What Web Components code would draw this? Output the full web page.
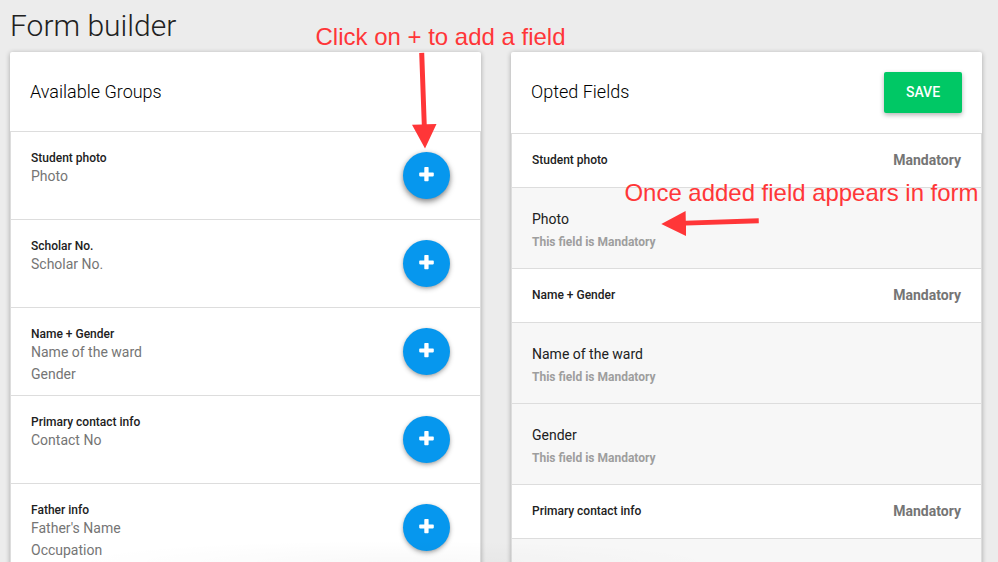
<!DOCTYPE html>
<html lang="en">
<head>
<meta charset="utf-8">
<title>Form builder</title>
<style>
html, body { margin: 0; height: 562px; overflow: hidden; background: #ececec; font-family: Roboto, "Liberation Sans", sans-serif; }
</style>
</head>
<body>
<form-builder></form-builder>
<script>
function define(name, html, setup) {
  const template = document.createElement('template');
  template.innerHTML = html;
  customElements.define(name, class extends HTMLElement {
    constructor() {
      super();
      this.attachShadow({ mode: 'open' }).append(template.content.cloneNode(true));
    }
    connectedCallback() { if (setup) setup(this, this.shadowRoot); }
  });
}

define('add-button', `
<style>
:host { display: block; width: 47px; height: 47px; flex: none; }
button { display: flex; justify-content: center; width: 47px; height: 47px; padding: 15px 0 0; box-sizing: border-box; border: 0; border-radius: 50%; background: #0697ee; box-shadow: 0 2px 5px rgba(0,0,0,.28), 0 1px 3px rgba(0,0,0,.12); }
svg { display: block; }
:host([raised]) button { box-shadow: 0 3px 6px rgba(0,0,0,.4), 0 1px 4px rgba(0,0,0,.16); }
</style>
<button aria-label="Add"><svg width="15" height="15" viewBox="0 0 15 15"><path fill="#fff" d="M6 0h3q.6 0 .6.6V5.4h4.4q.8 0 .8.8v2.4q0 .8-.8.8H9.6V13.5q0 .7-.7.7H6q-.7 0-.7-.7V9.4H1q-.8 0-.8-.8V6.2q0-.8.8-.8h4.3V.7Q5.3 0 6 0z"/></svg></button>`);

define('save-button', `
<style>
:host { display: block; flex: none; }
button { display: block; width: 78px; height: 41px; padding: 0; border: 0; border-radius: 2px; background: #00c865; color: #fff; font: 500 14px/41px Roboto, sans-serif; box-shadow: 0 2px 5px rgba(0,0,0,.3); }
</style>
<button><slot></slot></button>`);

define('field-card', `
<style>
:host { display: block; width: 471px; height: 700px; flex: none; background: #fff; border-radius: 2px; box-shadow: 0 1px 5px rgba(0,0,0,.3); }
header { display: flex; align-items: flex-start; justify-content: space-between; height: var(--head, 79px); padding: 20px 20px 0; box-sizing: border-box; }
h2 { margin: 8px 0 0; font-size: 18px; line-height: 24px; font-weight: 300; color: #000; white-space: nowrap; }
main { border: 1px solid #ddd; }
</style>
<header><h2><slot name="title"></slot></h2><slot name="action"></slot></header>
<main><slot></slot></main>`);

define('group-row', `
<style>
:host { display: flex; justify-content: space-between; height: 88px; padding: 17px 30px 0 20px; box-sizing: border-box; border-top: 1px solid #ddd; }
:host(:first-of-type) { height: 87px; border-top: 0; }
b { display: block; font-size: 12px; line-height: 19px; font-weight: 500; color: #212121; }
.fields { font-size: 14px; line-height: 22px; color: #757575; margin-top: -3px; }
add-button { margin-top: 3px; }
</style>
<div><b></b><div class="fields"></div></div><add-button></add-button>`,
(el, root) => {
  root.querySelector('b').textContent = el.getAttribute('name');
  for (const name of el.getAttribute('fields').split('|')) {
    const d = document.createElement('div');
    d.textContent = name;
    root.querySelector('.fields').append(d);
  }
  if (el.previousElementSibling.tagName !== 'GROUP-ROW') root.querySelector('add-button').setAttribute('raised', '');
});

define('opted-group', `
<style>
:host { display: flex; justify-content: space-between; align-items: center; height: 54px; padding: 0 20px 2px; box-sizing: border-box; border-bottom: 1px solid #ddd; }
b { font-size: 12px; font-weight: 500; color: #212121; }
span { font-size: 14px; font-weight: 700; color: #757575; }
</style>
<b><slot></slot></b><span>Mandatory</span>`);

define('opted-field', `
<style>
:host { display: block; height: 81px; padding: 20px 20px 0; box-sizing: border-box; border-bottom: 1px solid #ddd; background: #f7f7f7; }
div { font-size: 14px; line-height: 22px; color: #212121; }
small { display: block; font-size: 12px; line-height: 16px; margin-top: 4px; font-weight: 700; color: #9e9e9e; }
:host(:empty) small { display: none; }
</style>
<div><slot></slot></div><small>This field is Mandatory</small>`);

define('note-layer', `
<style>
:host { position: absolute; inset: 0; pointer-events: none; }
svg { display: block; }
text { font-family: "Liberation Sans", Arial, sans-serif; font-size: 24px; fill: #ff3638; }
path { fill: #ff3638; }
.fade { position: absolute; left: 60px; right: 270px; bottom: 0; height: 22px; background: radial-gradient(ellipse at 50% 100%, rgba(0,0,0,.025), transparent 70%); }
</style>
<svg width="998" height="562" viewBox="0 0 998 562">
<text x="315.5" y="45" textLength="250" lengthAdjust="spacingAndGlyphs">Click on + to add a field</text>
<text x="624.5" y="201" textLength="354" lengthAdjust="spacingAndGlyphs">Once added field appears in form</text>
<path d="M419.2 53L424.2 52.8L426.7 124.2L436.5 123.9L425 148.5L412 124.7L421.8 124.4Z"/>
<path d="M758.7 218.3L758.8 223.3L686 225.6L686 236L661.3 224L685.6 211L685.8 220.8Z"/>
</svg><div class="fade"></div>`);

define('form-builder', `
<style>
:host { display: block; position: relative; width: 998px; height: 562px; overflow: hidden; }
h1 { margin: 0; height: 52px; padding: 7px 0 0 10px; box-sizing: border-box; font-size: 30px; line-height: 38px; font-weight: 300; color: #212121; white-space: nowrap; }
.columns { display: flex; gap: 30px; padding-left: 10px; }
.opted { --head: 81px; }
</style>
<h1>Form builder</h1>
<div class="columns">
<field-card><span slot="title">Available Groups</span>
<group-row name="Student photo" fields="Photo"></group-row>
<group-row name="Scholar No." fields="Scholar No."></group-row>
<group-row name="Name + Gender" fields="Name of the ward|Gender"></group-row>
<group-row name="Primary contact info" fields="Contact No"></group-row>
<group-row name="Father info" fields="Father's Name|Occupation"></group-row>
</field-card>
<field-card class="opted"><span slot="title">Opted Fields</span><save-button slot="action">SAVE</save-button>
<opted-group>Student photo</opted-group>
<opted-field>Photo</opted-field>
<opted-group>Name + Gender</opted-group>
<opted-field>Name of the ward</opted-field>
<opted-field>Gender</opted-field>
<opted-group>Primary contact info</opted-group>
<opted-field></opted-field>
</field-card>
</div>
<note-layer></note-layer>`);
</script>
</body>
</html>
